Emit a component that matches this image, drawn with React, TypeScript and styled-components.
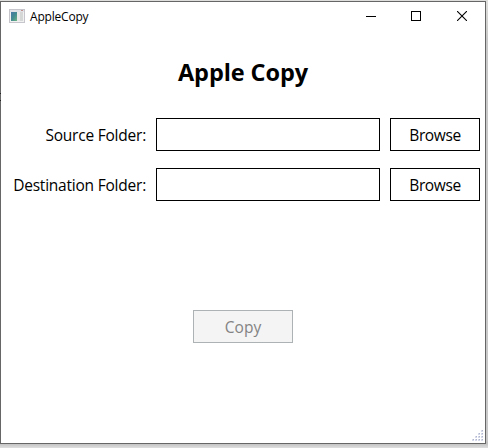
import React from "react";
import styled, { createGlobalStyle } from "styled-components";

const GlobalStyle = createGlobalStyle`
  * { box-sizing: border-box; }
  body {
    margin: 0;
    overflow: hidden;
    background: #fff;
    font-family: "Segoe UI", "Open Sans", "Noto Sans", sans-serif;
    color: #000;
  }
`;

const Desktop = styled.div`
  width: 488px;
  height: 448px;
  padding-top: 1px;
  overflow: hidden;
  background: linear-gradient(#dededc 0 1px, #c9c9c9 40px 440px, #bdbdbd 443px, #dedede 448px);
`;

const Window = styled.main`
  position: relative;
  width: 486px;
  height: 443px;
  display: flex;
  flex-direction: column;
  border: 1px solid #666;
  background: #fff;

  /* dark specks showing through the translucent left frame */
  &::before {
    content: "";
    position: absolute;
    left: -1px;
    top: 91px;
    width: 1px;
    height: 6px;
    border: solid #222;
    border-width: 1px 0;
  }
`;

const TitleBar = styled.header`
  display: flex;
  align-items: center;
  height: 30px;
  padding-left: 8px;
`;

const Caption = styled.span`
  flex: 1;
  margin-left: 5px;
  font-size: 12px;
  line-height: 16px;
  letter-spacing: -0.2px;
`;

const WindowButton = styled.span`
  display: flex;
  align-items: center;
  justify-content: center;
  width: 46px;
  height: 30px;
  padding-bottom: 2px;
  &:nth-last-child(3) {
    padding-left: 2px;
  }
`;

const Content = styled.section`
  flex: 1;
  display: flex;
  flex-direction: column;
  align-items: center;
`;

const Heading = styled.h1`
  margin: 24px 0 0;
  height: 32px;
  font-size: 23.5px;
  line-height: 32px;
  font-weight: 700;
  letter-spacing: -0.08px;
`;

const Form = styled.div`
  align-self: stretch;
  display: grid;
  grid-template-columns: 145px 224px 90px;
  column-gap: 10px;
  row-gap: 17px;
  margin-top: 30px;
`;

const Label = styled.label`
  height: 33px;
  line-height: 34px;
  font-size: 15.5px;
  letter-spacing: -0.22px;
  text-align: right;
  white-space: nowrap;
`;

const PathInput = styled.input`
  width: 100%;
  height: 33px;
  padding: 0 6px;
  border: 1px solid #000;
  border-radius: 0;
  background: #fff;
  font: inherit;
  outline: none;
`;

const Button = styled.button<{ $width: number }>`
  width: ${(p) => p.$width}px;
  height: 33px;
  padding: 2px 0 0;
  border: 1px solid #000;
  background: #fff;
  color: #000;
  font-family: inherit;
  font-size: 15.5px;
  line-height: 29px;
  letter-spacing: -0.4px;
  &:disabled {
    border-color: #adb2b5;
    background: #f4f4f4;
    color: #838383;
    letter-spacing: 0;
  }
`;

const Actions = styled.div`
  margin-top: 109px;
`;

const Footer = styled.footer`
  display: flex;
  justify-content: flex-end;
  height: 13px;
  padding-right: 1px;
`;

const IconSvg = styled.svg`
  margin-bottom: 2px;
`;

function AppIcon() {
  return (
    <IconSvg width="16" height="14" viewBox="0 0 16 14" shapeRendering="crispEdges">
      <defs>
        <linearGradient id="screen" x1="0" y1="0" x2="1" y2="1">
          <stop offset="0" stopColor="#4778a8" />
          <stop offset="0.5" stopColor="#428b91" />
          <stop offset="1" stopColor="#70b583" />
        </linearGradient>
      </defs>
      <rect x="0.5" y="0.5" width="15" height="13" fill="#f1f1f1" stroke="#c5c5cb" />
      <rect x="1" y="1" width="14" height="2" fill="#e1e1e8" />
      <rect x="12" y="1" width="2" height="1" fill="#bd918e" />
      <rect x="2" y="3" width="6" height="9" fill="url(#screen)" />
      <rect x="8" y="3" width="3" height="9" fill="#e8e8e8" />
      <rect x="11" y="3" width="3" height="9" fill="#d4d7d5" />
    </IconSvg>
  );
}

const MinimizeIcon = () => (
  <svg width="10" height="10" shapeRendering="crispEdges">
    <path d="M0 5.5H10" stroke="#000" />
  </svg>
);

const MaximizeIcon = () => (
  <svg width="10" height="10" shapeRendering="crispEdges">
    <rect x="0.5" y="0.5" width="9" height="9" fill="none" stroke="#000" />
  </svg>
);

const CloseIcon = () => (
  <svg width="10" height="10">
    <path d="M0 0L10 10M10 0L0 10" stroke="#000" strokeWidth="1.1" />
  </svg>
);

const gripDots = [
  [9, 0],
  [6, 3], [9, 3],
  [3, 6], [6, 6], [9, 6],
  [0, 9], [3, 9], [6, 9], [9, 9],
];

function ResizeGrip() {
  return (
    <svg width="12" height="12" shapeRendering="crispEdges">
      {gripDots.map(([x, y]) => (
        <g key={`${x}-${y}`}>
          <rect x={x} y={y} width="2" height="2" fill="#d5d9ea" />
          <rect x={x + 1} y={y} width="1" height="1" fill="#b0b6cc" />
        </g>
      ))}
    </svg>
  );
}

const folders = ["Source Folder:", "Destination Folder:"];

export default function App() {
  return (
    <Desktop>
      <GlobalStyle />
      <Window>
        <TitleBar>
          <AppIcon />
          <Caption>AppleCopy</Caption>
          <WindowButton><MinimizeIcon /></WindowButton>
          <WindowButton><MaximizeIcon /></WindowButton>
          <WindowButton><CloseIcon /></WindowButton>
        </TitleBar>
        <Content>
          <Heading>Apple Copy</Heading>
          <Form>
            {folders.map((name) => (
              <React.Fragment key={name}>
                <Label>{name}</Label>
                <PathInput aria-label={name} />
                <Button $width={90}>Browse</Button>
              </React.Fragment>
            ))}
          </Form>
          <Actions>
            <Button $width={100} disabled>Copy</Button>
          </Actions>
        </Content>
        <Footer><ResizeGrip /></Footer>
      </Window>
    </Desktop>
  );
}
